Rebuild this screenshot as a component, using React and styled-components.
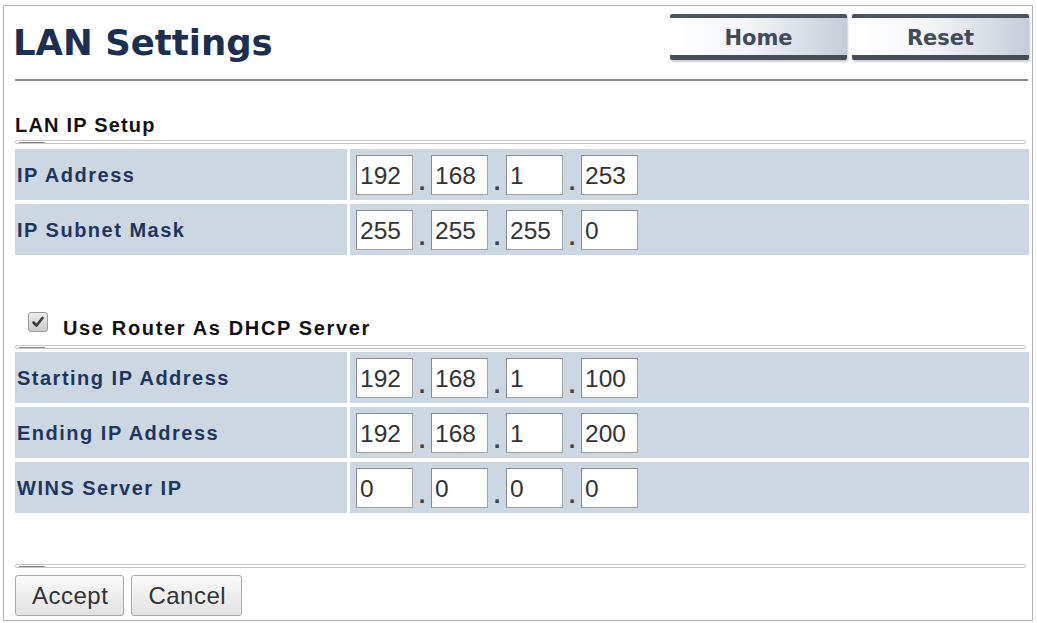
import React from 'react'
import styled, { createGlobalStyle } from 'styled-components'

const GlobalStyle = createGlobalStyle`
  html, body {
    margin: 0;
    padding: 0;
    background: #ffffff;
  }
  body {
    font-family: "Liberation Sans", Arial, sans-serif;
  }
`

const lanRows = [
  { label: 'IP Address', ip: ['192', '168', '1', '253'] },
  { label: 'IP Subnet Mask', ip: ['255', '255', '255', '0'] },
]

const dhcpRows = [
  { label: 'Starting IP Address', ip: ['192', '168', '1', '100'] },
  { label: 'Ending IP Address', ip: ['192', '168', '1', '200'] },
  { label: 'WINS Server IP', ip: ['0', '0', '0', '0'] },
]

function IpField({ ip }) {
  return (
    <IpCell>
      {ip.map((part, i) => (
        <React.Fragment key={i}>
          {i > 0 && <Dot>.</Dot>}
          <Octet defaultValue={part} />
        </React.Fragment>
      ))}
    </IpCell>
  )
}

function SettingsRows({ rows, top }) {
  return (
    <Rows top={top}>
      {rows.map(row => (
        <React.Fragment key={row.label}>
          <LabelCell>{row.label}</LabelCell>
          <IpField ip={row.ip} />
        </React.Fragment>
      ))}
    </Rows>
  )
}

export default function App() {
  return (
    <>
      <GlobalStyle />
      <Panel>
        <Header>
          <Title>LAN Settings</Title>
          <NavGroup>
            <NavButton>Home</NavButton>
            <NavButton>Reset</NavButton>
          </NavGroup>
        </Header>

        <SectionTitle>LAN IP Setup</SectionTitle>
        <Rule />
        <SettingsRows rows={lanRows} />

        <DhcpLine>
          <CheckBox>
            <svg width="14" height="14" viewBox="0 0 14 14">
              <path d="M2.5 7.5 L5.5 10.5 L11.5 3" fill="none" stroke="#3a3a3a" strokeWidth="2.6" strokeLinecap="round" strokeLinejoin="round" />
            </svg>
          </CheckBox>
          <DhcpText>Use Router As DHCP Server</DhcpText>
        </DhcpLine>
        <Rule top={5} />
        <SettingsRows rows={dhcpRows} top={3} />

        <Rule top={51} />
        <Actions>
          <FormButton>Accept</FormButton>
          <FormButton>Cancel</FormButton>
        </Actions>
      </Panel>
    </>
  )
}

const Panel = styled.div`
  box-sizing: border-box;
  height: 616px;
  margin: 5px 4px 0 3px;
  padding: 0 3px 0 11px;
  border: 1px solid #b4b4b4;
  display: flex;
  flex-direction: column;
`

const Header = styled.div`
  display: flex;
  justify-content: space-between;
  align-items: flex-start;
  height: 73px;
  margin-right: 1px;
  border-bottom: 2px solid #8e8e8e;
`

const Title = styled.h1`
  margin: 16px 0 0 -2px;
  font-family: "DejaVu Sans", Verdana, sans-serif;
  font-weight: bold;
  font-size: 35.5px;
  line-height: 41px;
  color: #1b2f52;
`

const NavGroup = styled.div`
  display: flex;
  gap: 5px;
  margin-top: 8px;
  margin-right: -1px;
`

const NavButton = styled.div`
  box-sizing: border-box;
  width: 177px;
  height: 46px;
  padding-top: 3px;
  display: flex;
  align-items: center;
  justify-content: center;
  border-top: 4px solid #4d5461;
  border-bottom: 5px solid #474d58;
  border-radius: 2px;
  background: linear-gradient(to right, #ffffff 0%, #f2f4f7 45%, #c6cdd8 100%);
  box-shadow: 1px 2px 2px rgba(0, 0, 0, 0.2);
  font-family: "DejaVu Sans", Verdana, sans-serif;
  font-weight: bold;
  font-size: 21px;
  color: #434b5a;
`

const SectionTitle = styled.div`
  margin-top: 33px;
  font-weight: bold;
  font-size: 20px;
  line-height: 22px;
  letter-spacing: 1.2px;
  color: #111111;
`

const Rule = styled.div`
  position: relative;
  box-sizing: border-box;
  height: 4px;
  margin: ${p => p.top ?? 4}px 3px 0 0;
  border: 1px solid #c6c6c6;
  border-radius: 2px;

  &::before {
    content: "";
    position: absolute;
    left: 3px;
    top: 1px;
    width: 26px;
    height: 1px;
    background: #8a8a8a;
  }
`

const Rows = styled.div`
  display: grid;
  grid-template-columns: 332px 1fr;
  grid-auto-rows: 51px;
  column-gap: 3px;
  row-gap: 4px;
  margin-top: ${p => p.top ?? 5}px;
`

const LabelCell = styled.div`
  display: flex;
  align-items: center;
  padding-left: 2px;
  padding-top: 2px;
  background: #cdd7e2;
  font-weight: bold;
  font-size: 20px;
  letter-spacing: 1.5px;
  color: #1d3660;
`

const IpCell = styled.div`
  display: flex;
  align-items: center;
  padding-left: 6px;
  background: #cdd7e2;
`

const Octet = styled.input`
  box-sizing: border-box;
  width: 57px;
  height: 40px;
  margin: 0;
  padding: 2px 0 0 3px;
  border: 1px solid #a2a2a2;
  border-top-color: #8c8c8c;
  border-left-color: #8c8c8c;
  background: #ffffff;
  font-family: "Liberation Sans", Arial, sans-serif;
  font-size: 24.5px;
  color: #333333;
  outline: none;
`

const Dot = styled.span`
  width: 18px;
  height: 40px;
  display: flex;
  align-items: flex-end;
  justify-content: center;
  font-size: 24px;
  font-weight: bold;
  line-height: 1;
  color: #444444;
  padding-bottom: 1px;
  box-sizing: border-box;
`

const DhcpLine = styled.div`
  display: flex;
  align-items: flex-start;
  gap: 15px;
  margin: 57px 0 0 13px;
`

const CheckBox = styled.span`
  box-sizing: border-box;
  width: 20px;
  height: 20px;
  display: flex;
  align-items: center;
  justify-content: center;
  border: 1px solid #9c9c9c;
  border-radius: 3px;
  background: linear-gradient(#ececec, #c9c9c9);
`

const DhcpText = styled.span`
  margin-top: 4px;
  font-weight: bold;
  font-size: 20px;
  line-height: 24px;
  letter-spacing: 1.65px;
  color: #111111;
`

const Actions = styled.div`
  display: flex;
  gap: 7px;
  margin-top: 7px;
`

const FormButton = styled.button`
  height: 41px;
  padding: 0 15px 0 16px;
  border: 1px solid #a9a9a9;
  border-radius: 3px;
  background: linear-gradient(#fafafa, #e2e2e2);
  font-family: "Liberation Sans", Arial, sans-serif;
  font-size: 24px;
  letter-spacing: 0.5px;
  color: #333333;
`
